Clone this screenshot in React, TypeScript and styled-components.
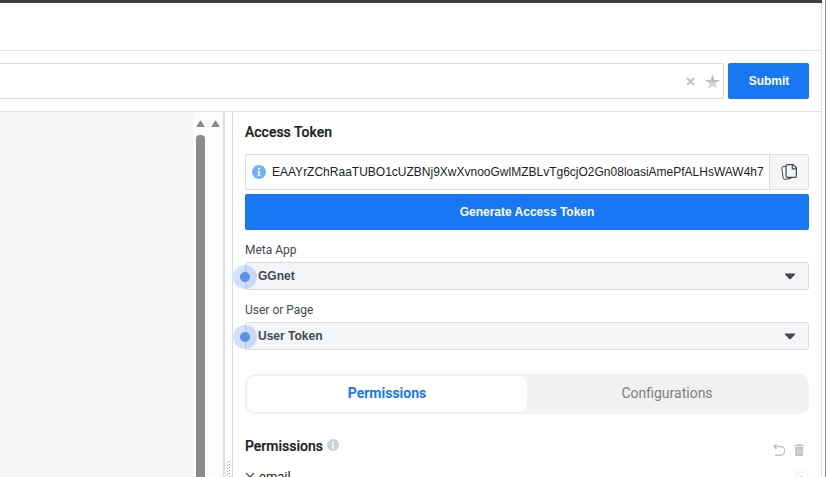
import React from "react";
import styled, { createGlobalStyle } from "styled-components";

const Global = createGlobalStyle`
  *, *::before, *::after { box-sizing: border-box; }
  html, body { margin: 0; background: #fff; overflow: hidden; }
`;

const Frame = styled.div`
  display: flex;
  width: 826px;
  height: 477px;
  overflow: hidden;
  background: #fff;
  font-family: Roboto, "Liberation Sans", Arial, sans-serif;
  color: #1c1e21;
`;

const Page = styled.div`
  width: 822px;
  flex: none;
  display: flex;
  flex-direction: column;
  border-top: 3px solid #404040;
`;

const Inner = styled.div`
  flex: 1;
  min-height: 0;
  display: flex;
  flex-direction: column;
  border-right: 1px solid #dddfe2;
`;

const WindowEdge = styled.div`
  width: 4px;
  flex: none;
  border-right: 1px solid #8a8a8a;
`;

const Header = styled.header`
  height: 48px;
  flex: none;
  border-bottom: 1px solid #e2e3e5;
`;

const QueryBar = styled.div`
  height: 61px;
  flex: none;
  display: flex;
  align-items: center;
  gap: 4px;
  padding: 0 12px 0 0;
  border-bottom: 1px solid #dadde1;
`;

const QueryField = styled.div`
  flex: 1;
  height: 36px;
  display: flex;
  align-items: center;
  justify-content: flex-end;
  gap: 10px;
  padding: 1px 3px 0 0;
  border: 1px solid #dadbe0;
  border-left: 0;
  border-radius: 0 2px 2px 0;
`;

const Button = styled.button<{ $width: number; $indent?: number }>`
  width: ${(p) => p.$width}px;
  height: 36px;
  flex: none;
  padding: 0 0 0 ${(p) => p.$indent ?? 0}px;
  border: 0;
  border-radius: 2px;
  background: #1877f2;
  color: #fff;
  font: bold 12px/36px "Liberation Sans", Arial, sans-serif;
`;

const Main = styled.main`
  flex: 1;
  min-height: 0;
  display: flex;
`;

const Response = styled.section`
  width: 193px;
  flex: none;
  background: #f4f5f7;
`;

const Scrollbars = styled.div`
  width: 30px;
  flex: none;
  display: flex;
  gap: 6px;
  padding: 8px 0 0 3px;
  background: #fcfcfc;
`;

const Track = styled.div`
  width: 9px;
  display: flex;
  flex-direction: column;
  gap: 8px;
  align-items: center;

  svg { flex: none; display: block; }
`;

const Thumb = styled.div`
  width: 9px;
  flex: 1;
  border-radius: 4px 4px 0 0;
  background: #8b8b8b;
`;

const Splitter = styled.div`
  width: 10px;
  flex: none;
  display: flex;
  align-items: flex-end;
  justify-content: center;
  border-left: 2px solid #dadde1;
  border-right: 1px solid #dadbe0;

  svg { display: block; }
`;

const Panel = styled.aside`
  flex: 1;
  min-width: 0;
  padding: 0 12px;
`;

const Title = styled.h2`
  margin: 0;
  font-size: 14px;
  font-weight: 500;
  line-height: 18px;
  -webkit-text-stroke: 0.2px currentColor;
`;

const TokenTitle = styled(Title)`
  padding-top: 11px;
  height: 42px;
`;

const TokenRow = styled.div`
  height: 36px;
  margin-bottom: 4px;
  display: flex;
  border: 1px solid #dadde1;
  border-radius: 2px;
`;

const TokenValue = styled.div`
  flex: 1;
  min-width: 0;
  display: flex;
  align-items: center;
  gap: 6px;
  padding-left: 6px;
  font: 12px/34px "Liberation Sans", Arial, sans-serif;
  white-space: nowrap;

  svg { flex: none; }
`;

const CopyButton = styled.div`
  width: 39px;
  display: flex;
  align-items: center;
  justify-content: center;
  border-left: 1px solid #dadde1;
  background: #f5f6f7;
`;

const Label = styled.div`
  height: 32px;
  padding-top: 12px;
  font-size: 12px;
  line-height: 16px;
  color: #444950;
`;

const Select = styled.div`
  position: relative;
  height: 28px;
  display: flex;
  align-items: center;
  justify-content: space-between;
  padding: 0 12px;
  border: 1px solid #dadbe3;
  border-radius: 2px;
  background: #f4f5f7;
  color: #444950;
  font: bold 12px/26px "Liberation Sans", Arial, sans-serif;
`;

const Hotspot = styled.span`
  position: absolute;
  left: -13px;
  top: 2px;
  width: 24px;
  height: 24px;
  border-radius: 50%;
  background: rgba(90, 143, 247, 0.27);

  &::after {
    content: "";
    position: absolute;
    inset: 7px;
    border-radius: 50%;
    background: #5b91ea;
  }
`;

const Tabs = styled.div`
  height: 40px;
  margin: 24px 0 23px;
  display: flex;
  padding: 2px;
  border-radius: 10px;
  background: #f1f1f1;
`;

const Tab = styled.div<{ $active?: boolean }>`
  flex: 1;
  text-align: center;
  font-size: 14px;
  line-height: 35px;
  border-radius: 8px;
  background: ${(p) => (p.$active ? "#fff" : "transparent")};
  color: ${(p) => (p.$active ? "#1877f2" : "#808080")};
  font-weight: ${(p) => (p.$active ? 700 : 400)};
`;

const PermissionsHead = styled.div`
  display: flex;
  align-items: center;
  gap: 4px;
  height: 18px;
`;

const InfoMark = styled.span`
  display: flex;
  padding-bottom: 2px;
`;

const Tools = styled.div`
  display: flex;
  gap: 8px;
  margin: 7px 4px 0 auto;
`;

const PermissionRow = styled.div`
  display: flex;
  gap: 4px;
  align-items: center;
  margin-top: 13px;
  font-size: 13px;
  line-height: 18px;
`;

const RowEnd = styled.div`
  width: 15px;
  height: 18px;
  margin-left: auto;
  padding: 7px 0 0 5px;
  background: #fafafa;

  svg { display: block; }
`;

const ScrollArrow = () => (
  <svg width="9" height="7" viewBox="0 0 9 7">
    <path d="M4.500.8 8.200 6.500H.8Z" fill="#8b8b8b" stroke="#8b8b8b" strokeLinejoin="round" />
  </svg>
);

const Info = ({ size, color }: { size: number; color: string }) => (
  <svg width={size} height={size} viewBox="0 0 14 14">
    <circle cx="7" cy="7" r="7" fill={color} />
    <circle cx="7" cy="3.800" r="1.100" fill="#fff" />
    <path d="M5.500 6H7.800V10.200H8.600V11H5.500V10.200H6.300V6.800H5.500Z" fill="#fff" />
  </svg>
);

const Caret = () => (
  <svg width="12" height="7" viewBox="0 0 12 7">
    <path d="M1 .5h10v1L7 5.700Q6 7 5 5.700L1 1.500Z" fill="#444950" />
  </svg>
);

function Field({ label, value }: { label: string; value: string }) {
  return (
    <>
      <Label>{label}</Label>
      <Select>
        <Hotspot />
        <span>{value}</span>
        <Caret />
      </Select>
    </>
  );
}

export default function App() {
  return (
    <>
      <Global />
      <Frame>
        <Page>
          <Inner>
            <Header />
            <QueryBar>
              <QueryField>
                <svg width="9" height="9" viewBox="0 0 9 9">
                  <path d="m1 1 7 7M8 1 1 8" stroke="#bec3c9" strokeWidth="2" />
                </svg>
                <svg width="15" height="14" viewBox="0 0 15 14">
                  <defs>
                    <linearGradient id="star" x1="0" y1="0" x2="0" y2="1">
                      <stop stopColor="#a8a8a8" />
                      <stop offset=".4" stopColor="#bcbcbc" />
                      <stop offset=".5" stopColor="#cfcfcf" />
                      <stop offset="1" stopColor="#dcdcdc" />
                    </linearGradient>
                  </defs>
                  <path d="m7.500 0 1.700 5H15l-4.600 3.400L12 14l-4.500-3.300L3 14l1.600-5.600L0 5h5.800Z" fill="url(#star)" />
                </svg>
              </QueryField>
              <Button $width={81} $indent={1}>Submit</Button>
            </QueryBar>
            <Main>
              <Response />
              <Scrollbars>
                <Track>
                  <ScrollArrow />
                  <Thumb />
                </Track>
                <Track>
                  <ScrollArrow />
                </Track>
              </Scrollbars>
              <Splitter>
                <svg width="4" height="16" viewBox="0 0 4 16">
                  <path d="M.5 1v15M2.500 0v16" stroke="#999" strokeDasharray="1 2" />
                </svg>
              </Splitter>
              <Panel>
                <TokenTitle>Access Token</TokenTitle>
                <TokenRow>
                  <TokenValue>
                    <Info size={14} color="#6fb0fc" />
                    <span>EAAYrZChRaaTUBO1cUZBNj9XwXvnooGwlMZBLvTg6cjO2Gn08loasiAmePfALHsWAW4h7</span>
                  </TokenValue>
                  <CopyButton>
                    <svg width="16" height="16" viewBox="0 0 16 16" fill="none" stroke="#444950" strokeWidth="1.200">
                      <path d="M6.600.6h5.600l3.200 3.200v8.100q0 1.500-1.500 1.500H6.600q-1.500 0-1.500-1.500V2.100Q5.100.6 6.600.6ZM11.300.8v4h4" />
                      <path d="M5 2.200l-3 .5Q.6 2.900.8 4.300l1.300 9.500q.2 1.700 1.700 1.500l6.400-.9" strokeWidth="1" />
                    </svg>
                  </CopyButton>
                </TokenRow>
                <Button $width={564}>Generate Access Token</Button>
                <Field label="Meta App" value="GGnet" />
                <Field label="User or Page" value="User Token" />
                <Tabs>
                  <Tab $active>Permissions</Tab>
                  <Tab>Configurations</Tab>
                </Tabs>
                <PermissionsHead>
                  <Title>Permissions</Title>
                  <InfoMark>
                    <Info size={12} color="#ccd0d5" />
                  </InfoMark>
                  <Tools>
                    <svg width="12" height="12" viewBox="0 0 12 12" fill="none" stroke="#bec3c9" strokeWidth="1.400">
                      <path d="M3.500 0 1 2.500 3.500 5M1 2.500h6.500a4.300 4.300 0 0 1 0 8.700H2" />
                    </svg>
                    <svg width="12" height="12" viewBox="0 0 12 12">
                      <path d="M1 1h3V0h4v1h3v1.300H1ZM2 3h8v7.500q0 1.500-1.500 1.500h-5Q2 12 2 10.500Z" fill="#bec3c9" />
                      <path d="M4.200 4.500V10M6 4.500V10M7.800 4.500V10" stroke="#e7e9eb" strokeWidth=".7" />
                    </svg>
                  </Tools>
                </PermissionsHead>
                <PermissionRow>
                  <svg width="10" height="10" viewBox="0 0 10 10">
                    <path d="m1 1 8 8M9 1 1 9" stroke="#444950" strokeWidth="1.200" />
                  </svg>
                  <span>email</span>
                  <RowEnd>
                    <svg width="5" height="4" viewBox="0 0 5 4">
                      <path d="M2.500 1 5 4H0Z" fill="#8b8b8b" />
                    </svg>
                  </RowEnd>
                </PermissionRow>
              </Panel>
            </Main>
          </Inner>
        </Page>
        <WindowEdge />
      </Frame>
    </>
  );
}
